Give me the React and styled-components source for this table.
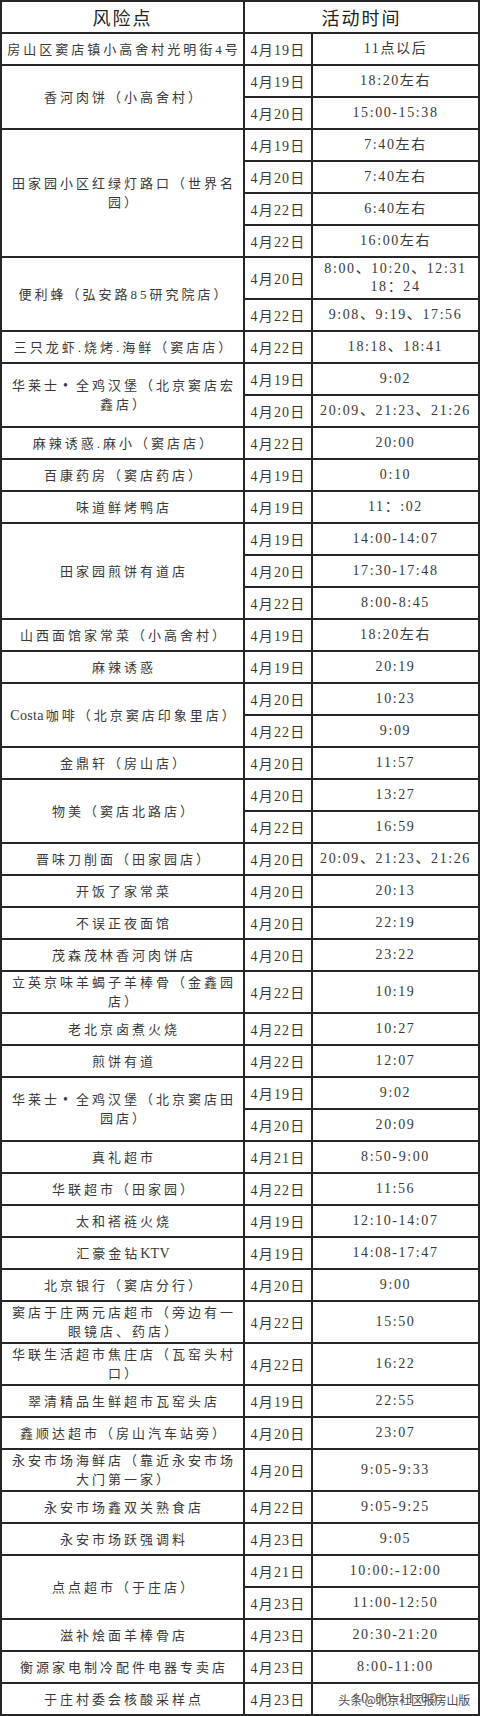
import React from 'react';
import styled, { createGlobalStyle } from 'styled-components';

const GlobalStyle = createGlobalStyle`
  html, body {
    margin: 0;
    padding: 0;
    background: #ffffff;
  }
  body {
    font-family: "Liberation Serif", "Noto Sans CJK SC", serif;
  }
`;

const Page = styled.div`
  position: relative;
  width: 480px;
`;

const Table = styled.div`
  display: flex;
  flex-direction: column;
  gap: 2px;
  padding: 2px;
  background: #262626;
`;

const Row = styled.div`
  display: flex;
  gap: 2px;
`;

const Cell = styled.div`
  background: #ffffff;
  display: flex;
  align-items: center;
  justify-content: center;
  text-align: center;
  white-space: pre-line;
  color: #383838;
  font-family: "Liberation Serif", "Noto Sans CJK SC", serif;
`;

const HeaderCell = styled(Cell)`
  height: 30px;
  flex: ${(p) => (p.$wide ? '1' : '0 0 241px')};
  font-size: 18px;
  letter-spacing: 2px;
  color: #222222;
  font-family: "Noto Sans CJK SC", sans-serif;
`;

const NameCell = styled(Cell)`
  flex: 0 0 241px;
  box-sizing: border-box;
  padding: 0 2px 0 5px;
  font-size: 13px;
  line-height: 19px;
  letter-spacing: 3px;
`;

const Latin = styled.span`
  letter-spacing: 0.3px;
  margin-right: 2px;
  font-size: 14px;
`;

const Dot = styled.span`
  margin: 0 5px 0 3px;
  font-size: 14px;
`;

const SubList = styled.div`
  flex: 1;
  display: flex;
  flex-direction: column;
  gap: 2px;
`;

const SubRow = styled.div`
  display: flex;
  gap: 2px;
  height: ${(p) => (p.$tall ? '40px' : '30px')};
`;

const DateCell = styled(Cell)`
  flex: 0 0 66px;
  font-size: 14px;
  letter-spacing: 1.2px;
`;

const TimeCell = styled(Cell)`
  flex: 1;
  font-size: 14px;
  line-height: 18px;
  letter-spacing: 1.6px;
`;

const Watermark = styled.div`
  position: absolute;
  right: 10px;
  bottom: 8px;
  font-family: "Noto Sans CJK SC", sans-serif;
  font-size: 12px;
  line-height: 16px;
  letter-spacing: -0.2px;
  color: #4a4a4a;
  text-shadow: 0 0 1px #ffffff, 0 0 2px #ffffff;
  white-space: nowrap;
`;

const data = [
  { name: '房山区窦店镇小高舍村光明街4号', items: [['4月19日', '11点以后']] },
  { name: '香河肉饼（小高舍村）', items: [['4月19日', '18:20左右'], ['4月20日', '15:00-15:38']] },
  {
    name: '田家园小区红绿灯路口（世界名\n园）',
    items: [['4月19日', '7:40左右'], ['4月20日', '7:40左右'], ['4月22日', '6:40左右'], ['4月22日', '16:00左右']],
  },
  {
    name: '便利蜂（弘安路85研究院店）',
    items: [['4月20日', '8:00、10:20、12:31\n18：24', true], ['4月22日', '9:08、9:19、17:56']],
  },
  { name: '三只龙虾.烧烤.海鲜（窦店店）', items: [['4月22日', '18:18、18:41']] },
  { name: '华莱士•全鸡汉堡（北京窦店宏\n鑫店）', items: [['4月19日', '9:02'], ['4月20日', '20:09、21:23、21:26']] },
  { name: '麻辣诱惑.麻小（窦店店）', items: [['4月22日', '20:00']] },
  { name: '百康药房（窦店药店）', items: [['4月19日', '0:10']] },
  { name: '味道鲜烤鸭店', items: [['4月19日', '11：:02']] },
  {
    name: '田家园煎饼有道店',
    items: [['4月19日', '14:00-14:07'], ['4月20日', '17:30-17:48'], ['4月22日', '8:00-8:45']],
  },
  { name: '山西面馆家常菜（小高舍村）', items: [['4月19日', '18:20左右']] },
  { name: '麻辣诱惑', items: [['4月19日', '20:19']] },
  { name: 'Costa咖啡（北京窦店印象里店）', items: [['4月20日', '10:23'], ['4月22日', '9:09']] },
  { name: '金鼎轩（房山店）', items: [['4月20日', '11:57']] },
  { name: '物美（窦店北路店）', items: [['4月20日', '13:27'], ['4月22日', '16:59']] },
  { name: '晋味刀削面（田家园店）', items: [['4月20日', '20:09、21:23、21:26']] },
  { name: '开饭了家常菜', items: [['4月20日', '20:13']] },
  { name: '不误正夜面馆', items: [['4月20日', '22:19']] },
  { name: '茂森茂林香河肉饼店', items: [['4月20日', '23:22']] },
  { name: '立英京味羊蝎子羊棒骨（金鑫园\n店）', items: [['4月22日', '10:19', true]] },
  { name: '老北京卤煮火烧', items: [['4月22日', '10:27']] },
  { name: '煎饼有道', items: [['4月22日', '12:07']] },
  { name: '华莱士•全鸡汉堡（北京窦店田\n园店）', items: [['4月19日', '9:02'], ['4月20日', '20:09']] },
  { name: '真礼超市', items: [['4月21日', '8:50-9:00']] },
  { name: '华联超市（田家园）', items: [['4月22日', '11:56']] },
  { name: '太和褡裢火烧', items: [['4月19日', '12:10-14:07']] },
  { name: '汇豪金钻KTV', items: [['4月19日', '14:08-17:47']] },
  { name: '北京银行（窦店分行）', items: [['4月20日', '9:00']] },
  { name: '窦店于庄两元店超市（旁边有一\n眼镜店、药店）', items: [['4月22日', '15:50', true]] },
  { name: '华联生活超市焦庄店（瓦窑头村\n口）', items: [['4月22日', '16:22', true]] },
  { name: '翠清精品生鲜超市瓦窑头店', items: [['4月19日', '22:55']] },
  { name: '鑫顺达超市（房山汽车站旁）', items: [['4月20日', '23:07']] },
  { name: '永安市场海鲜店（靠近永安市场\n大门第一家）', items: [['4月20日', '9:05-9:33', true]] },
  { name: '永安市场鑫双关熟食店', items: [['4月22日', '9:05-9:25']] },
  { name: '永安市场跃强调料', items: [['4月23日', '9:05']] },
  { name: '点点超市（于庄店）', items: [['4月21日', '10:00:-12:00'], ['4月23日', '11:00-12:50']] },
  { name: '滋补烩面羊棒骨店', items: [['4月23日', '20:30-21:20']] },
  { name: '衡源家电制冷配件电器专卖店', items: [['4月23日', '8:00-11:00']] },
  { name: '于庄村委会核酸采样点', items: [['4月23日', '10:00-11:00']] },
];

function renderName(text) {
  return text.split(/([A-Za-z]+|•)/).map((part, k) => {
    if (part === '•') return <Dot key={k}>•</Dot>;
    if (/^[A-Za-z]+$/.test(part)) return <Latin key={k}>{part}</Latin>;
    return <React.Fragment key={k}>{part}</React.Fragment>;
  });
}

export default function App() {
  return (
    <Page>
      <GlobalStyle />
      <Table>
        <Row>
          <HeaderCell>风险点</HeaderCell>
          <HeaderCell $wide>活动时间</HeaderCell>
        </Row>
        {data.map((g, i) => (
          <Row key={i}>
            <NameCell>
              <span>{renderName(g.name)}</span>
            </NameCell>
            <SubList>
              {g.items.map(([date, time, tall], j) => (
                <SubRow key={j} $tall={tall}>
                  <DateCell>{date}</DateCell>
                  <TimeCell>{time}</TimeCell>
                </SubRow>
              ))}
            </SubList>
          </Row>
        ))}
      </Table>
      <Watermark>头条 @北京社区报房山版</Watermark>
    </Page>
  );
}
